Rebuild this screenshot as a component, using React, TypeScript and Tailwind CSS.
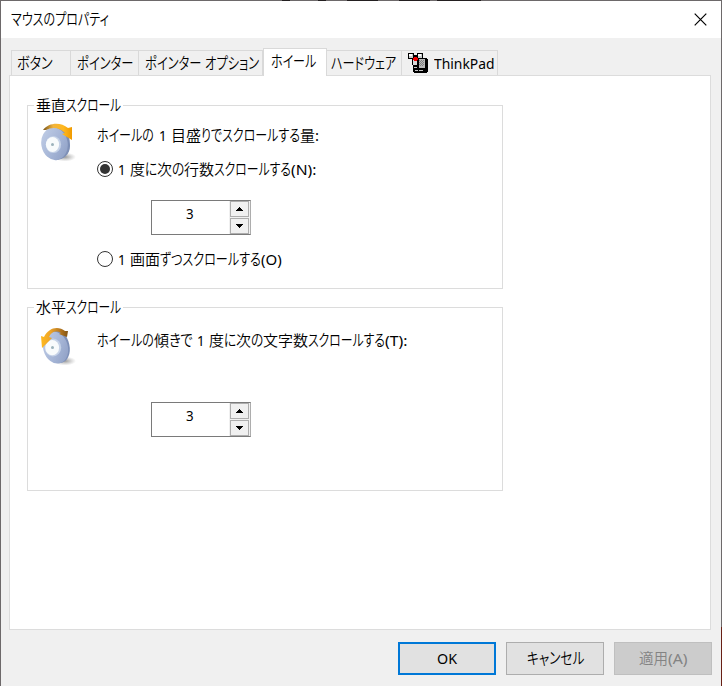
import { useLayoutEffect, useRef } from "react";
import type { ReactNode } from "react";

type Run = [string, number];

// One stretch of text squeezed or widened to the given advance width.
function Fit({ text, w }: { text: string; w: number }) {
  const ref = useRef<HTMLSpanElement>(null);
  const kana = /^[\u3040-\u30ff]+$/.test(text);
  const latin = /^[\x20-\x7e]+$/.test(text);
  useLayoutEffect(() => {
    const el = ref.current;
    if (el) el.style.transform = `scaleX(${w / el.offsetWidth})`;
  }, [text, w]);
  return (
    <span className="block h-5 shrink-0" style={{ width: w }}>
      <span ref={ref} className={"inline-block origin-left whitespace-pre leading-5 " + (kana ? "text-[16px] font-[350] [font-feature-settings:'palt']" : latin ? "font-normal" : "font-[350]")}>{text}</span>
    </span>
  );
}

function Line({ runs, className = "" }: { runs: Run[]; className?: string }) {
  return (
    <span className={"flex h-5 whitespace-nowrap leading-5 " + className}>
      {runs.map(([t, w], i) => <Fit key={i} text={t} w={w} />)}
    </span>
  );
}

function Tab({ runs, className }: { runs: Run[]; className: string }) {
  return (
    <div className={"flex h-[25px] shrink-0 border-t border-r border-[#d9d9d9] pt-[2px] " + className}>
      <Line runs={runs} />
    </div>
  );
}

function DeviceIcon() {
  return (
    <svg className="mr-[5px] h-[21px] w-[21px] shrink-0" viewBox="0 0 21 21" shapeRendering="crispEdges">
      <path d="M0 0h6v2h3V0h6v5h4v1h1v13h-1v1H6v-1H5v-7H4V6H0Z" fill="#000" />
      <path d="M1 1h4v4H1zM10 1h4v4h-4z" fill="#c8cccc" />
      <path d="M1 1h3v2H1zM10 1h3v2h-3z" fill="#fff" />
      <path d="M5 7h4v5H5z" fill="#d8d8d8" />
      <path d="M11 6h6v9h-6z" fill="#b8b8b8" />
      <path d="M11 7h1v1h-1zM13 7h1v1h-1zM15 7h1v1h-1zM12 8h1v1h-1zM14 8h1v1h-1zM11 9h1v1h-1zM13 9h1v1h-1zM15 9h1v1h-1zM12 10h1v1h-1zM14 10h1v1h-1zM11 11h1v1h-1zM13 11h1v1h-1zM15 11h1v1h-1zM12 12h1v1h-1zM14 12h1v1h-1z" fill="#808080" />
      <path d="M6 14h3v1H6zM7 17h3v1H7zM11 17h4v1h-4z" fill="#c6c6c6" />
      <path d="M6 4h3v1h1v2H9v1H6V7H5V5h1Z" fill="#f00000" />
    </svg>
  );
}

function WheelIcon({ tilt = false }: { tilt?: boolean }) {
  const id = tilt ? "t" : "v";
  return (
    <svg className="h-[42px] w-[38px] shrink-0" viewBox="0 0 38 42">
      <defs>
        <linearGradient id={id + "r"} x1="0" y1="0" x2="1" y2="1">
          <stop offset="0" stopColor="#c3d0e8" />
          <stop offset="0.55" stopColor="#a5b5d6" />
          <stop offset="1" stopColor="#8b9cc2" />
        </linearGradient>
        <linearGradient id={id + "a"} x1="0" y1="0" x2="1" y2="0">
          <stop offset="0" stopColor={tilt ? "#ffb91c" : "#75531b"} />
          <stop offset="0.35" stopColor={tilt ? "#eda52a" : "#f2b43c"} />
          <stop offset="0.7" stopColor={tilt ? "#b87920" : "#ffb81f"} />
          <stop offset="1" stopColor={tilt ? "#805315" : "#f09a00"} />
        </linearGradient>
        <radialGradient id={id + "s"}>
          <stop offset="0" stopColor="#777" stopOpacity=".75" />
          <stop offset="1" stopColor="#999" stopOpacity="0" />
        </radialGradient>
      </defs>
      <ellipse cx="25" cy="35" rx="11" ry="4.5" fill={`url(#${id}s)`} />
      {tilt ? (
        <>
          <ellipse cx="18.5" cy="20.5" rx="11" ry="16.5" transform="rotate(-12 18.5 20.5)" fill="#7d90b8" />
          <ellipse cx="15.5" cy="21.5" rx="12.3" ry="16.3" transform="rotate(-16 15.5 21.5)" fill={`url(#${id}r)`} />
          <ellipse cx="13" cy="21.5" rx="8.2" ry="9" fill="#c5d2e7" />
          <ellipse cx="12.2" cy="21.7" rx="6.9" ry="7.6" fill="#f8fbfc" />
          <path d="M1 10 4 11C8 2 18 -1 25 5L28 5 27 11 19 8 21 7C16 4 11 6 9 11L12 12 2 22Z" fill={`url(#${id}a)`} />
        </>
      ) : (
        <>
          <path d="M14 4C26 3 30 13 30 24 30 32 24 38 15 38Z" fill="#7d8fb6" />
          <ellipse cx="14.5" cy="21.8" rx="13.2" ry="16.4" transform="rotate(-10 14.5 21.8)" fill={`url(#${id}r)`} />
          <ellipse cx="13.4" cy="22.5" rx="7.7" ry="8.6" fill="#c5d2e7" />
          <ellipse cx="12.5" cy="22.5" rx="6.6" ry="7.5" fill="#f8fbfc" />
          <path d="M3 8C9 0 21 0 28 6L32 5V18L22 12 25 11C19 5 12 5 6 8Z" fill={`url(#${id}a)`} />
        </>
      )}
      <circle cx="12.5" cy={tilt ? 21.5 : 22.5} r="1.5" fill="#9cb2bb" />
    </svg>
  );
}

function StepButton({ down = false }: { down?: boolean }) {
  return (
    <button className="flex h-4 w-[19px] items-center justify-center border border-[#adadad] bg-[#f0f0f0]">
      <svg className="h-1 w-[7px]" viewBox="0 0 7 4" shapeRendering="crispEdges">
        <path d={down ? "M0 0h7v1H6v1H5v1H4v1H3V3H2V2H1V1H0Z" : "M3 0h1v1h1v1h1v1h1v1H0V3h1V2h1V1h1Z"} />
      </svg>
    </button>
  );
}

function Spinner({ className }: { className: string }) {
  return (
    <div className={"ml-[54px] flex h-[35px] w-[100px] border border-[#7a7a7a] border-r-[#adadad] bg-white " + className}>
      <div className="flex flex-1 justify-center pt-[2px] pr-px"><Line runs={[["3", 8]]} /></div>
      <div className="flex w-[21px] flex-col items-center justify-between bg-[#f0f0f0]">
        <StepButton />
        <StepButton down />
      </div>
    </div>
  );
}

function Radio({ on = false }: { on?: boolean }) {
  return (
    <span className="mt-[2px] mr-[5px] flex size-4 shrink-0 items-center justify-center rounded-full border border-[#333] bg-white">
      {on && <span className="size-[10px] rounded-full bg-[#333]" />}
    </span>
  );
}

function Group({ title, className, children }: { title: Run[]; className: string; children: ReactNode }) {
  return (
    <section className={"ml-[17px] h-[184px] w-[476px] border border-[#dcdcdc] " + className}>
      <h2 className="-mt-[11px] ml-[6px] flex w-[89px] bg-white pl-[2px]"><Line runs={title} /></h2>
      <div className="flex">{children}</div>
    </section>
  );
}

export default function App() {
  return (
    <div className="flex h-[686px] w-[722px] overflow-hidden bg-[#f0f0f0] font-['Noto_Sans','Noto_Sans_CJK_JP',sans-serif] text-[15px] text-black">
      <div className="w-px bg-[#6d696a]" />
      <main className="flex w-[720px] flex-col">
        <div className="flex h-px shrink-0 bg-[#6d696a]">
          <span className="ml-[281px] w-2 bg-[#231f20]" />
          <span className="ml-[28px] w-2 bg-[#231f20]" />
          <span className="ml-[21px] w-[31px] bg-[#231f20]" />
          <span className="ml-[21px] w-[31px] bg-[#231f20]" />
          <span className="ml-[7px] w-[44px] bg-[#231f20]" />
        </div>
        <header className="flex h-[37px] shrink-0 justify-between bg-white pt-[8px] pr-[14px] pl-[10px]">
          <Line runs={[["マウスのプロパティ", 98]]} />
          <svg className="mt-[4px] size-[13px]" viewBox="0 0 13 13"><path d="M.7.7l11.6 11.6M12.3.7.7 12.3" stroke="#000" strokeWidth="1.2" /></svg>
        </header>
        <nav className="relative z-10 mt-[10px] ml-[10px] flex h-[28px] shrink-0 items-end pb-px">
          <Tab className="w-[60px] border-l pl-[5px]" runs={[["ボタン", 36]]} />
          <Tab className="w-[68px] pl-[6px]" runs={[["ポインター", 56]]} />
          <Tab className="w-[124px] pl-[6px]" runs={[["ポインター", 56], [" ", 4], ["オプション", 54]]} />
          <div className="-mb-px flex h-7 w-[64px] shrink-0 border-x border-t border-[#d9d9d9] bg-white pt-[2px] pl-[7px]">
            <Line runs={[["ホイール", 45]]} />
          </div>
          <Tab className="w-[75px] pl-[4px]" runs={[["ハードウェア", 65]]} />
          <div className="flex h-[25px] w-[96px] shrink-0 border-t border-r border-[#d9d9d9] pt-[2px] pl-[6px]">
            <DeviceIcon />
            <Line runs={[["ThinkPad", 60]]} />
          </div>
        </nav>
        <section className="-mt-px ml-[8px] h-[555px] w-[702px] shrink-0 border border-[#dcdcdc] bg-white">
          <Group className="mt-[29px]" title={[["垂直", 30], ["スクロール", 55]]}>
            <div className="mt-[7px] ml-[12px] w-[57px]"><WheelIcon /></div>
            <div className="pt-[10px]">
              <Line runs={[["ホイールの", 57], [" ", 5], ["1", 8], [" ", 4], ["目盛", 30], ["りでスクロールする", 99], ["量", 15], [":", 4]]} />
              <div className="mt-[14px] flex">
                <Radio on />
                <Line runs={[["1", 8], [" ", 4], ["度", 15], ["に", 12], ["次", 15], ["の", 12], ["行数", 30], ["スクロールする", 77], ["(N):", 25]]} />
              </div>
              <Spinner className="mt-[21px]" />
              <div className="mt-[14px] flex">
                <Radio />
                <Line runs={[["1", 8], [" ", 4], ["画面", 30], ["ずつスクロールする", 101], ["(O)", 21]]} />
              </div>
            </div>
          </Group>
          <Group className="mt-[18px]" title={[["水平", 30], ["スクロール", 55]]}>
            <div className="mt-[9px] ml-[12px] w-[57px]"><WheelIcon tilt /></div>
            <div className="pt-[13px]">
              <Line runs={[["ホイールの", 57], ["傾", 15], ["きで", 24], [" ", 4], ["1", 8], [" ", 4], ["度", 15], ["に", 12], ["次", 15], ["の", 12], ["文字数", 45], ["スクロールする", 77], ["(T):", 22]]} />
              <Spinner className="mt-[52px]" />
            </div>
          </Group>
        </section>
        <footer className="mt-[12px] flex shrink-0 justify-end gap-[10px] pr-[9px]">
          <button className="flex h-[33px] w-[98px] justify-center border-2 border-[#0078d7] bg-[#e1e1e1] pt-[4px]"><Line runs={[["OK", 20]]} /></button>
          <button className="flex h-[33px] w-[98px] justify-center border border-[#adadad] bg-[#e1e1e1] pt-[5px]"><Line runs={[["キャンセル", 57]]} /></button>
          <button className="flex h-[33px] w-[98px] justify-center border border-[#bfbfbf] bg-[#cccccc] pt-[5px] text-[#838383]"><Line runs={[["適用", 29], ["(A)", 20]]} /></button>
        </footer>
      </main>
      <div className="flex w-px flex-col bg-[#682015]"><span className="h-[627px] bg-[#6d696a]" /></div>
    </div>
  );
}
